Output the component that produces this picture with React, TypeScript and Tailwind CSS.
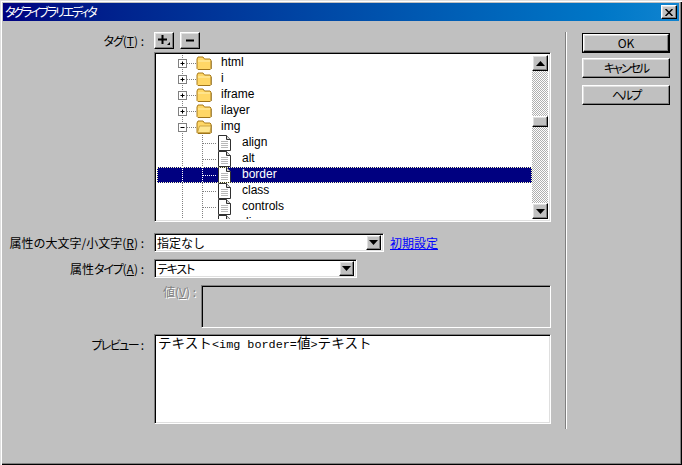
const jp = 'font-["Noto_Sans_CJK_JP","Liberation_Sans",sans-serif]'
const kana = '[font-feature-settings:"palt"]'
const sunken =
  'border border-t-[#808080] border-l-[#808080] border-r-white border-b-white shadow-[inset_1px_1px_0_#000,inset_-1px_-1px_0_#dfdfdf]'
const raised =
  'border border-t-white border-l-white border-r-black border-b-black shadow-[inset_-1px_-1px_0_#808080,inset_1px_1px_0_#dfdfdf]'

function Arrow({ up }: { up?: boolean }) {
  return (
    <svg width="9" height="5" viewBox="0 0 9 5">
      <path d={up ? 'M4.5 0 L9 5 L0 5 Z' : 'M0 0 L9 0 L4.5 5 Z'} fill="#000" />
    </svg>
  )
}

function ArrowButton({ up, className }: { up?: boolean; className?: string }) {
  return (
    <div className={`w-4 h-4 shrink-0 flex items-center justify-center bg-[#c0c0c0] ${raised} ${className ?? ''}`}>
      <Arrow up={up} />
    </div>
  )
}

function Folder({ open }: { open?: boolean }) {
  return (
    <svg width="16" height="14" viewBox="0 0 16 14" className="shrink-0">
      <path d="M1 3 L2 1 H7 L8.5 3 H14 L15 4 V12.5 L14 13.5 H2 L1 12.5 Z" fill="#ffd766" stroke="#a87a1a" />
      {open ? (
        <path d="M1.5 12.5 L3.5 6 H15 L14 12.5 Z" fill="#ffe68f" stroke="#c09838" strokeWidth="0.8" />
      ) : (
        <path d="M2 5 H14" stroke="#fff0b0" />
      )}
      <path d="M2 14 H15 M15.5 5 V13" stroke="#8a6a20" strokeOpacity="0.6" />
    </svg>
  )
}

function Doc() {
  return (
    <svg width="13" height="16" viewBox="0 0 13 16" className="shrink-0">
      <path d="M0.5 0.5 H8.5 L12.5 4.5 V15.5 H0.5 Z" fill="#fff" stroke="#303030" />
      <path d="M8.5 0.5 V4.5 H12.5" fill="#d8d8d8" stroke="#303030" />
      <path d="M3 6.5 H10 M3 8.5 H10 M3 10.5 H10 M3 12.5 H10" stroke="#b8b8b8" />
    </svg>
  )
}

// guides + expander box for folder rows, box is centered at x=25 of the row
function FolderGuide({ open }: { open?: boolean }) {
  return (
    <svg width="39" height="16" viewBox="0 0 39 16" className="shrink-0">
      <path d="M25.5 0 V16" stroke="#808080" strokeDasharray="1 1" />
      <path d="M30 8.5 H39" stroke="#808080" strokeDasharray="1 1" />
      <rect x="21.5" y="4.5" width="8" height="8" fill="#fff" stroke="#808080" />
      <path d={open ? 'M23.5 8.5 H27.5' : 'M23.5 8.5 H27.5 M25.5 6.5 V10.5'} stroke="#000" />
    </svg>
  )
}

function LeafGuide({ dark }: { dark?: boolean }) {
  const c = dark ? '#ffffff' : '#808080'
  return (
    <svg width="61" height="16" viewBox="0 0 61 16" className="shrink-0">
      <path d="M25.5 0 V16 M45.5 0 V16 M46 8.5 H60" stroke={c} strokeDasharray="1 1" />
    </svg>
  )
}

const folders = [
  { name: 'html' },
  { name: 'i' },
  { name: 'iframe' },
  { name: 'ilayer' },
  { name: 'img', open: true },
]
const leaves = ['align', 'alt', 'border', 'class', 'controls', 'dir']

function TagTree() {
  return (
    <div className={`w-[397px] h-[170px] bg-white p-[2px] flex ${sunken}`}>
      <div className='flex-1 overflow-hidden text-[12px] leading-[14px] text-black font-["Liberation_Sans",sans-serif]'>
        {folders.map((f) => (
          <div key={f.name} className="h-4 flex items-center">
            <FolderGuide open={f.open} />
            <Folder open={f.open} />
            <span className="ml-[9px] pb-[2px]">{f.name}</span>
          </div>
        ))}
        {leaves.map((name) => {
          const selected = name === 'border'
          return (
            <div
              key={name}
              className={`h-4 flex items-center ${
                selected ? 'bg-[#000080] text-white outline-1 -outline-offset-1 outline-dotted outline-[#ffffc0]' : ''
              }`}
            >
              <LeafGuide dark={selected} />
              <Doc />
              <span className="ml-[11px] pb-[2px]">{name}</span>
            </div>
          )
        })}
      </div>
      <div className="w-4 flex flex-col bg-[repeating-conic-gradient(#b0b0b0_0%_25%,#ffffff_0%_50%)] bg-[length:2px_2px]">
        <ArrowButton up />
        <div className={`w-4 h-[11px] mt-[45px] bg-[#c0c0c0] ${raised}`} />
        <div className="flex-1" />
        <ArrowButton />
      </div>
    </div>
  )
}

function Select({ value, width, narrow }: { value: string; width: string; narrow?: boolean }) {
  return (
    <div className={`${width} h-[19px] bg-white flex items-center justify-between p-[2px] ${sunken}`}>
      <span className={`text-[12px] leading-none text-black ${jp} ${narrow ? `${kana} tracking-[-1.2px]` : ''}`}>
        {value}
      </span>
      <div className={`w-[15px] h-[15px] flex items-center justify-center bg-[#c0c0c0] ${raised}`}>
        <Arrow />
      </div>
    </div>
  )
}

function Label({ children, className }: { children: React.ReactNode; className?: string }) {
  return (
    <div className={`w-[141px] shrink-0 text-right text-[12px] text-black whitespace-nowrap ${jp} ${className ?? ''}`}>
      {children}
    </div>
  )
}

function SideButton({ children, primary, className }: { children: string; primary?: boolean; className?: string }) {
  return (
    <div className={`${primary ? 'border border-black' : ''} ${className ?? ''}`}>
      <div
        className={`flex items-center justify-center bg-[#c0c0c0] text-[12px] text-black ${jp} ${kana} ${
          primary ? '' : 'tracking-[-2px]'
        } ${raised} ${primary ? 'h-[18px]' : 'h-[20px]'}`}
      >
        {children}
      </div>
    </div>
  )
}

export default function App() {
  return (
    <div className="w-[682px] h-[465px] overflow-hidden bg-[#c0c0c0] p-[3px] flex flex-col shadow-[inset_1px_1px_0_#dfdfdf,inset_2px_2px_0_#ffffff,inset_-1px_-1px_0_#000,inset_-2px_-2px_0_#808080]">
      <div className="h-[18px] shrink-0 flex items-center justify-between pl-[2px] pr-[2px] bg-gradient-to-r from-[#000080] to-[#1084d0]">
        <span className={`text-[12px] leading-none text-white ${jp} ${kana} tracking-[-2.2px]`}>タグライブラリエディタ</span>
        <div className={`w-[16px] h-[14px] flex items-center justify-center bg-[#c0c0c0] ${raised}`}>
          <svg width="8" height="7" viewBox="0 0 8 7">
            <path d="M0.5 0 L7.5 7 M7.5 0 L0.5 7" stroke="#000" strokeWidth="1.5" />
          </svg>
        </div>
      </div>

      <div className="flex-1 flex">
        <div className="w-[551px] shrink-0 flex flex-col">
          <div className="flex items-center mt-[11px] h-[17px]">
            <Label>
              <span className={`${kana} tracking-[-1.2px]`}>タグ</span>(<u>T</u>) :
            </Label>
            <div className="flex gap-[6px] ml-[10px]">
              <div className={`w-[20px] h-[17px] flex items-center justify-center bg-[#c0c0c0] ${raised}`}>
                <svg width="14" height="11" viewBox="0 0 14 11">
                  <path d="M1 4.5 H10 M5.5 0 V9" stroke="#000" strokeWidth="2" />
                  <path d="M13 7 V10 H10 Z" fill="#000" />
                </svg>
              </div>
              <div className={`w-[20px] h-[17px] flex items-center justify-center bg-[#c0c0c0] ${raised}`}>
                <svg width="10" height="3" viewBox="0 0 10 3">
                  <path d="M1 1.5 H9" stroke="#000" strokeWidth="2" />
                </svg>
              </div>
            </div>
          </div>

          <div className="ml-[151px] mt-[3px]">
            <TagTree />
          </div>

          <div className="flex items-center mt-[11px]">
            <Label>
              属性の大文字/小文字(<u>R</u>) :
            </Label>
            <div className="ml-[10px] flex items-center">
              <Select value="指定なし" width="w-[230px]" />
              <a className={`ml-[6px] text-[12px] text-[#0000ff] underline ${jp}`}>初期設定</a>
            </div>
          </div>

          <div className="flex items-center mt-[7px]">
            <Label>
              属性<span className={`${kana} tracking-[-1.2px]`}>タイプ</span>(<u>A</u>) :
            </Label>
            <div className="ml-[10px]">
              <Select value="テキスト" width="w-[203px]" narrow />
            </div>
          </div>

          <div className="flex items-start mt-[7px]">
            <div
              className={`ml-[160px] w-[38px] text-[12px] leading-[14px] text-[#808080] whitespace-nowrap [text-shadow:1px_1px_0_#fff] ${jp}`}
            >
              値(<u>V</u>) :
            </div>
            <div className="w-[350px] h-[43px] bg-[#c0c0c0] border border-t-[#808080] border-l-[#808080] border-r-white border-b-white shadow-[inset_1px_1px_0_#000]" />
          </div>

          <div className="flex items-start mt-[6px]">
            <Label className="pt-[2px]">
              <span className={`${kana} tracking-[-1.6px]`}>プレビュー</span> :
            </Label>
            <div className={`ml-[10px] w-[397px] h-[90px] bg-white pl-[3px] ${sunken}`}>
              <div className="whitespace-nowrap text-black leading-[15px]">
                <span className={`text-[13.6px] ${jp}`}>テキスト</span>
                <span className='text-[11.8px] font-["Liberation_Mono",monospace]'>&lt;img border=</span>
                <span className={`text-[13.6px] ${jp}`}>値</span>
                <span className='text-[11.8px] font-["Liberation_Mono",monospace]'>&gt;</span>
                <span className={`text-[13.6px] ${jp}`}>テキスト</span>
              </div>
            </div>
          </div>
        </div>

        <div className="ml-[11px] mt-[11px] mb-[33px] w-[2px] border-l border-l-[#808080] border-r border-r-white" />

        <div className="ml-[15px] w-[88px] mt-[12px] flex flex-col">
          <SideButton primary>OK</SideButton>
          <SideButton className="mt-[5px]">キャンセル</SideButton>
          <SideButton className="mt-[7px]">ヘルプ</SideButton>
        </div>
      </div>
    </div>
  )
}
